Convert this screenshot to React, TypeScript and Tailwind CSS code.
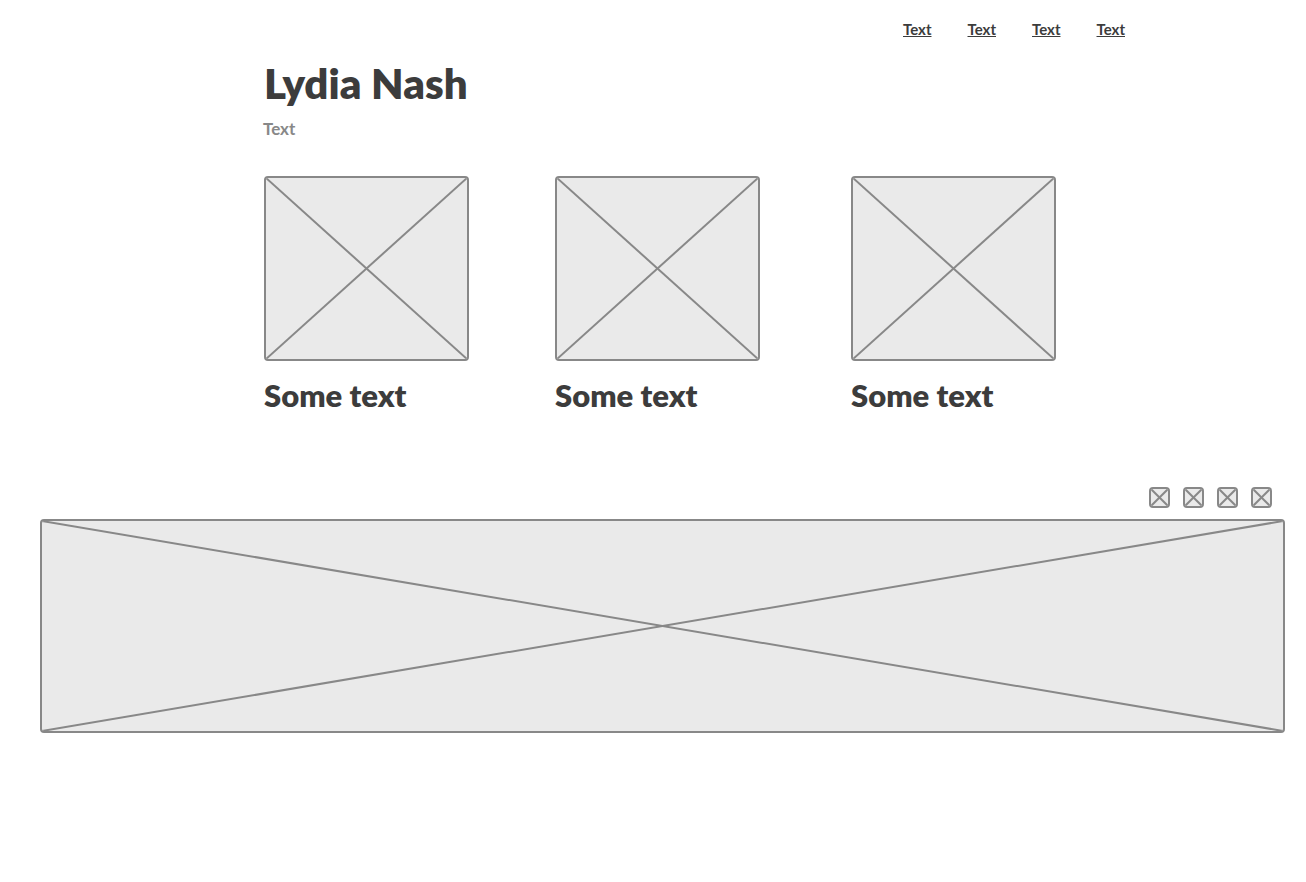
import React from "react";

function Placeholder({ className = "" }: { className?: string }) {
  return (
    <div className={`relative overflow-hidden rounded-[4px] border-2 border-[#888888] bg-[#eaeaea] ${className}`}>
      <svg className="absolute inset-0 h-full w-full" preserveAspectRatio="none" viewBox="0 0 100 100">
        <line x1="0" y1="0" x2="100" y2="100" stroke="#888888" strokeWidth="2" vectorEffect="non-scaling-stroke" />
        <line x1="100" y1="0" x2="0" y2="100" stroke="#888888" strokeWidth="2" vectorEffect="non-scaling-stroke" />
      </svg>
    </div>
  );
}

const links = ["Text", "Text", "Text", "Text"];
const cards = ["Some text", "Some text", "Some text"];

export default function App() {
  return (
    <div className="min-h-[882px] w-[1306px] bg-white font-['Lato',sans-serif] text-[#3c3c3c]">
      <nav className="flex justify-end gap-[36px] pr-[181px] pt-[19px]">
        {links.map((l, i) => (
          <a key={i} href="#" className="text-[15px] font-bold leading-5 underline">
            {l}
          </a>
        ))}
      </nav>

      <header className="pl-[264px] pt-[18px]">
        <h1 className="text-[42px] font-extrabold leading-[52px]">Lydia Nash</h1>
        <p className="-ml-px mt-[8px] text-[17px] font-bold leading-6 text-[#888888]">Text</p>
      </header>

      <section className="grid grid-cols-[291px_296px_204px] pl-[264px] pt-[35px]">
        {cards.map((c, i) => (
          <div key={i} className="flex flex-col">
            <Placeholder className="h-[185px] w-[205px]" />
            <h2 className="mt-[16px] text-[31px] font-extrabold leading-9">{c}</h2>
          </div>
        ))}
      </section>

      <div className="flex justify-end gap-[13px] pr-[34px] pt-[74px]">
        {[0, 1, 2, 3].map((i) => (
          <Placeholder key={i} className="h-[21px] w-[21px]" />
        ))}
      </div>

      <div className="pl-[40px] pr-[21px] pt-[11px]">
        <Placeholder className="h-[214px] w-full" />
      </div>
    </div>
  );
}
